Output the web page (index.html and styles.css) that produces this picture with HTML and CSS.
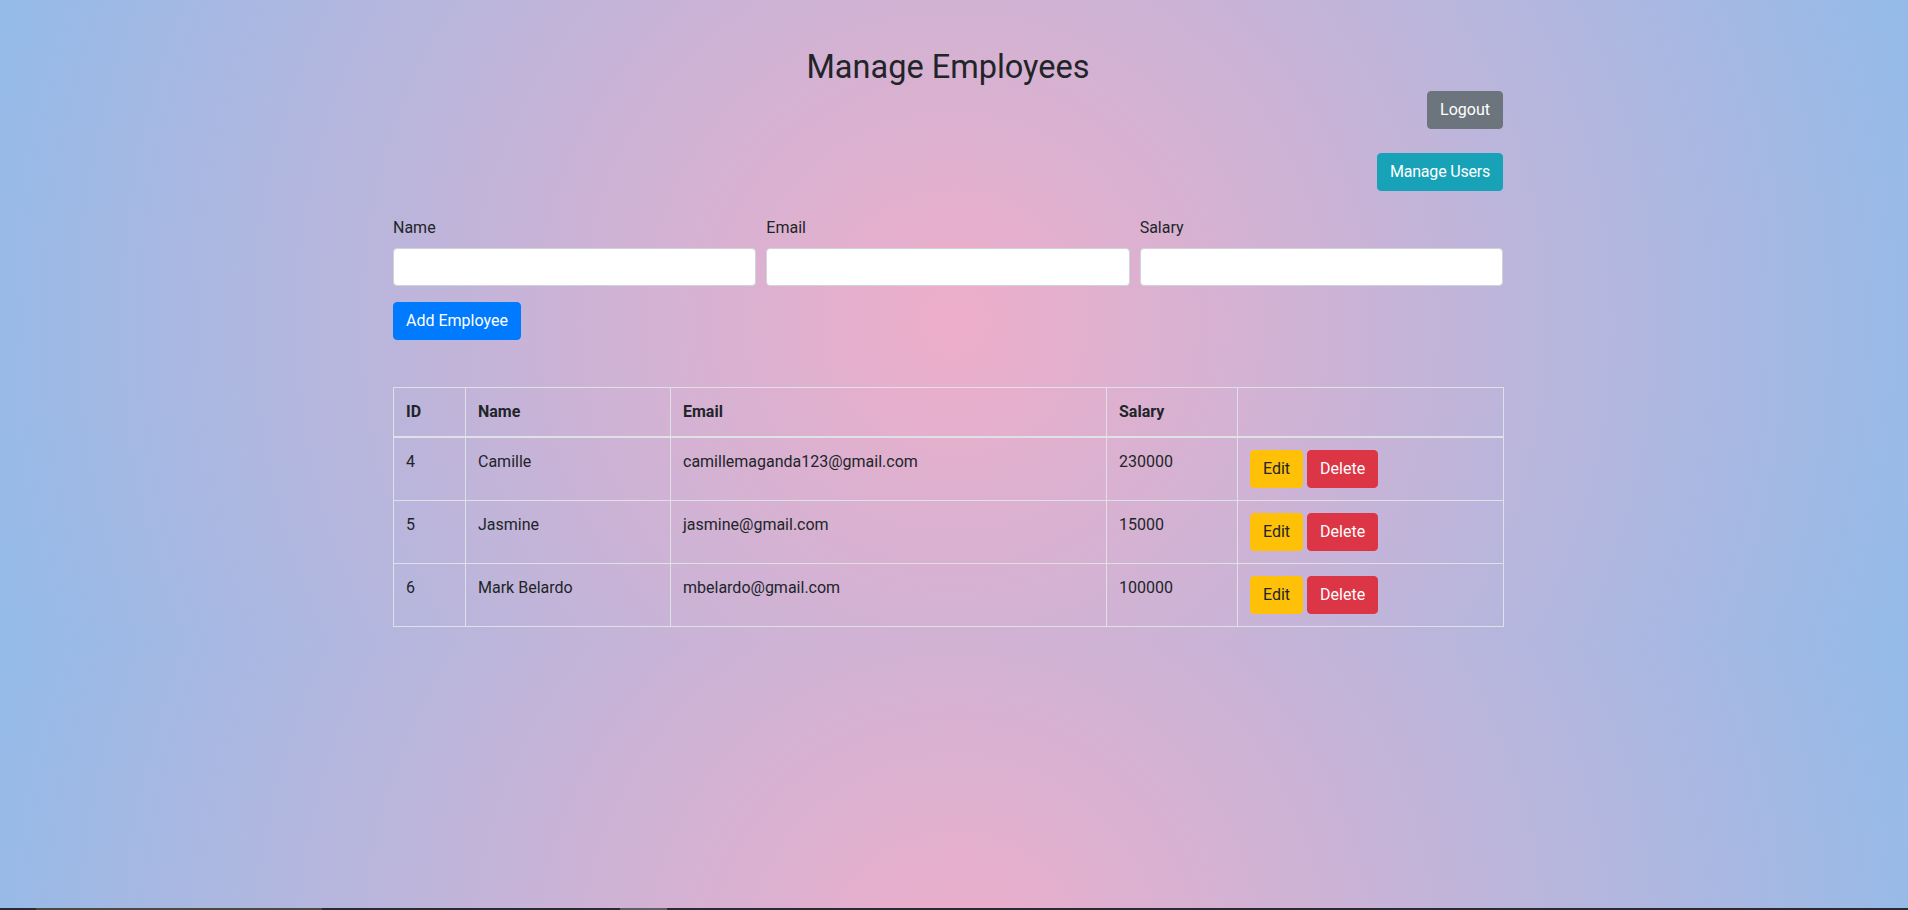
FILE: index.html
```html
<!DOCTYPE html>
<html lang="en">
<head>
<meta charset="utf-8">
<title>Manage Employees</title>
<link rel="stylesheet" href="styles.css">
</head>
<body>
<div class="page">
  <div class="container">
    <h2 class="title">Manage Employees</h2>
    <div class="actions">
      <button class="btn btn-secondary" type="button">Logout</button>
      <button class="btn btn-info btn-tight" type="button">Manage Users</button>
    </div>
    <form class="emp-form">
      <div class="form-row">
        <div class="field">
          <label class="label" for="name">Name</label>
          <input class="input" id="name" type="text">
        </div>
        <div class="field">
          <label class="label" for="email">Email</label>
          <input class="input" id="email" type="email">
        </div>
        <div class="field">
          <label class="label" for="salary">Salary</label>
          <input class="input" id="salary" type="number">
        </div>
      </div>
      <button class="btn btn-primary" type="button">Add Employee</button>
    </form>
    <table class="table">
      <colgroup>
        <col class="col-id">
        <col class="col-name">
        <col class="col-email">
        <col class="col-salary">
        <col class="col-actions">
      </colgroup>
      <thead>
        <tr><th>ID</th><th>Name</th><th>Email</th><th>Salary</th><th></th></tr>
      </thead>
      <tbody>
        <tr>
          <td>4</td><td>Camille</td><td>camillemaganda123@gmail.com</td><td>230000</td>
          <td><div class="row-actions"><button class="btn btn-warning" type="button">Edit</button><button class="btn btn-danger" type="button">Delete</button></div></td>
        </tr>
        <tr>
          <td>5</td><td>Jasmine</td><td>jasmine@gmail.com</td><td>15000</td>
          <td><div class="row-actions"><button class="btn btn-warning" type="button">Edit</button><button class="btn btn-danger" type="button">Delete</button></div></td>
        </tr>
        <tr>
          <td>6</td><td>Mark Belardo</td><td>mbelardo@gmail.com</td><td>100000</td>
          <td><div class="row-actions"><button class="btn btn-warning" type="button">Edit</button><button class="btn btn-danger" type="button">Delete</button></div></td>
        </tr>
      </tbody>
    </table>
  </div>
</div>
<div class="taskbar"><span class="seg seg-a"></span><span class="seg seg-b"></span></div>
</body>
</html>
```
FILE: styles.css
```css
html {
  background: radial-gradient(circle, #eeaeca 0%, #94bbe9 100%) 0 0 / 100% 643px repeat;
  min-height: 100%;
}
body {
  margin: 0;
  font-family: Roboto, "Segoe UI", "Liberation Sans", sans-serif;
  font-size: 16px;
  line-height: 1.5;
  color: #212529;
}
.page {
  padding: 48px 12px 0 0;
}
.container {
  width: 1110px;
  margin: 0 auto;
}
.title {
  font-size: 32.5px;
  font-weight: 400;
  line-height: 38.4px;
  margin: 0 0 4.7px;
  text-align: center;
}
.actions {
  display: flex;
  flex-direction: column;
  align-items: flex-end;
  gap: 24px;
  margin-bottom: 25px;
}
.btn {
  display: inline-block;
  font-family: inherit;
  font-size: 16px;
  line-height: 1.5;
  padding: 6px 12px;
  border: 1px solid transparent;
  border-radius: 4px;
  color: #fff;
  cursor: pointer;
}
.btn-tight { letter-spacing: -0.2px; }
.btn-secondary { background: #6c757d; border-color: #6c757d; }
.btn-info { background: #17a2b8; border-color: #17a2b8; }
.btn-primary { background: #007bff; border-color: #007bff; }
.btn-warning { background: #ffc107; border-color: #ffc107; color: #212529; }
.btn-danger { background: #dc3545; border-color: #dc3545; }
.form-row {
  display: grid;
  grid-template-columns: repeat(3, 1fr);
  gap: 10px;
}
.field {
  margin-bottom: 16px;
}
.label {
  display: block;
  margin-bottom: 8px;
}
.input {
  display: block;
  width: 100%;
  height: 38px;
  box-sizing: border-box;
  padding: 6px 12px;
  font-family: inherit;
  font-size: 16px;
  border: 1px solid #ced4da;
  border-radius: 4px;
  background: #fff;
}
.table {
  width: 100%;
  margin-top: 47px;
  border-collapse: collapse;
  table-layout: fixed;
  border: 1px solid #dee2e6;
}
.col-id { width: 72px; }
.col-name { width: 205px; }
.col-email { width: 436px; }
.col-salary { width: 131px; }
.col-actions { width: 266px; }
.table th,
.table td {
  padding: 12px;
  border: 1px solid #dee2e6;
  text-align: left;
  vertical-align: top;
}
.table th {
  font-weight: 700;
  vertical-align: bottom;
  border-bottom-width: 2px;
}
.row-actions {
  display: flex;
  gap: 4px;
}
.taskbar {
  position: fixed;
  left: 0;
  right: 0;
  bottom: 0;
  height: 2px;
  background: #2b2a33;
  display: flex;
}
.seg { display: block; height: 2px; }
.seg-a { margin-left: 36px; width: 286px; background: #4a4a42; }
.seg-b { margin-left: 298px; width: 47px; background: #5e5d66; }
```
